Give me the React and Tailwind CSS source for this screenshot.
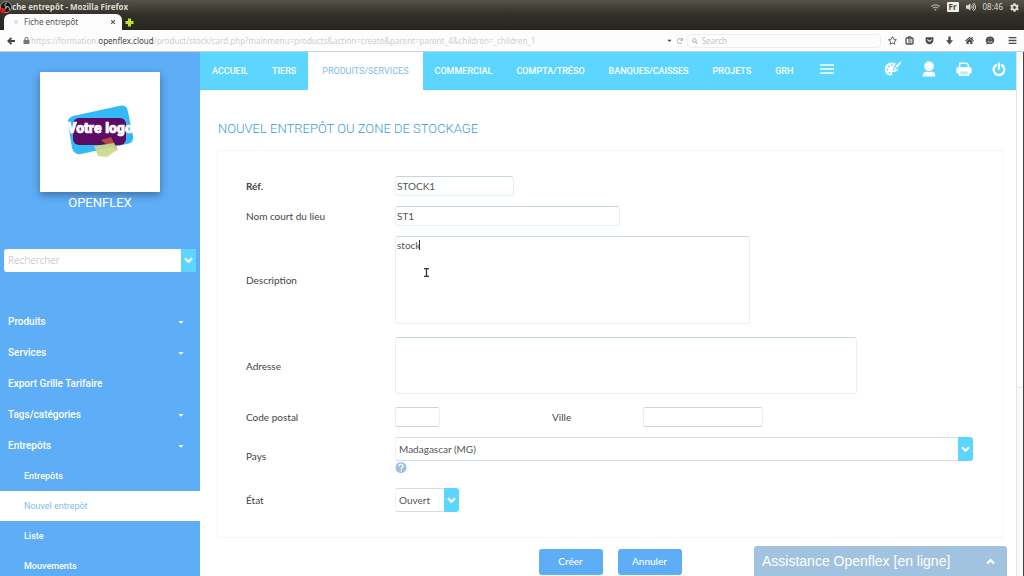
import React from 'react';
import {
  FaRegStar, FaGetPocket, FaHome, FaBars, FaCaretDown, FaLock, FaWifi,
  FaVolumeUp, FaSearch, FaTimes, FaRedo, FaCog,
} from 'react-icons/fa';

const sideMenu = [
  { label: 'Produits', open: true },
  { label: 'Services', open: true },
  { label: 'Export Grille Tarifaire', open: false },
  { label: 'Tags/catégories', open: true },
  { label: 'Entrepôts', open: true },
];

const subMenu = ['Entrepôts', 'Nouvel entrepôt', 'Liste', 'Mouvements'];

const navItems = ['ACCUEIL', 'TIERS', 'PRODUITS/SERVICES', 'COMMERCIAL', 'COMPTA/TRÉSO', 'BANQUES/CAISSES', 'PROJETS', 'GRH'];

const fieldClass = 'block border border-[#e6f1f3] border-t-[#c3d7dc] rounded-[3px] bg-white px-px text-[10px] leading-4 text-[#555] outline-none resize-none';

const ChevronDown = () => (
  <svg width="9" height="7" viewBox="0 0 9 7" fill="none" stroke="white" strokeWidth="2.200"><path d="M1 1.300 4.500 4.700 8 1.300" /></svg>
);

const ChevronUp = () => (
  <svg width="9" height="7" viewBox="0 0 9 7" fill="none" stroke="white" strokeWidth="2.200"><path d="M1 5.500 4.500 2 8 5.500" /></svg>
);

const PaletteIcon = () => (
  <svg width="18" height="16" viewBox="0 0 18 16" fill="white">
    <path fillRule="evenodd" d="M7.600 1.500C3.600 1.500.8 4.500.8 8.200c0 3.600 2.600 6.300 5.600 6.300 1.400 0 1.900-.8 1.700-1.800-.2-1.100.5-1.800 1.600-1.700 2.300.2 4.300-1 4.700-3.400L11.700 9 9 9.600l.4-2.700 2.500-4.100C10.700 1.900 9.200 1.500 7.600 1.500ZM5 4.500a.9.9 0 1 0 0 1.800.9.9 0 0 0 0-1.800ZM3.400 7.800a.9.9 0 1 0 0 1.800.9.9 0 0 0 0-1.800ZM8 3.200a.9.9 0 1 0 0 1.800.9.9 0 0 0 0-1.800ZM5.500 11a.9.9 0 1 0 0 1.800.9.9 0 0 0 0-1.800Z" />
    <path d="M16.800.8 17 2.400l-3.900 4.400-1.700-1.500L15.700 1ZM11 6l1.600 1.400c-.5 1.100-1.600 1.500-2.900 1.300C10.400 8.100 10.200 6.800 11 6Z" />
  </svg>
);

const UserIcon = () => (
  <svg width="14" height="16" viewBox="0 0 14 16" fill="white">
    <ellipse cx="7" cy="5.300" rx="4.800" ry="5" />
    <path d="M.8 15.500v-1.600c0-2.100 2-2.900 3.800-3.300 1.500.9 3.300.9 4.800 0 1.800.4 3.800 1.200 3.800 3.300v1.600Z" />
  </svg>
);

const PrintIcon = () => (
  <svg width="16" height="15" viewBox="0 0 16 15">
    <path d="M3.700 5V1.200h7l1.600 1.600V5" fill="none" stroke="white" strokeWidth="1.400" />
    <path d="M2.300 5h11.400A2 2 0 0 1 15.700 7v3.500a1 1 0 0 1-1 1h-1.400V14H2.700v-2.500H1.300a1 1 0 0 1-1-1V7a2 2 0 0 1 2-2Z" fill="white" />
    <path d="M4.300 9.500h7.400v3H4.300Z" fill="#b5ecff" />
  </svg>
);

const PowerIcon = () => (
  <svg width="14" height="15" viewBox="0 0 14 15" fill="none" stroke="white" strokeWidth="2.300" strokeLinecap="round">
    <path d="M7 1.300v5.500M3.900 3.200a5.400 5.400 0 1 0 6.200 0" />
  </svg>
);

const ListIcon = () => (
  <svg width="9" height="9" viewBox="0 0 9 9" fill="none" stroke="#4a4a4a">
    <rect x="1" y="2" width="7" height="6" rx="1" strokeWidth="1.300" />
    <path d="M3 2V.8h3V2M3 4h3.500M3 6h3.500" />
  </svg>
);

const ChatIcon = () => (
  <svg width="10" height="9" viewBox="0 0 10 9">
    <path d="M5 .5C7.400.5 9.300 2 9.300 4.200S7.400 8 5 8c-.6 0-1.200-.1-1.700-.3L1.200 8.600l.5-1.800C1 6.100.7 5.200.7 4.200.7 2 2.600.5 5 .5Z" fill="#4a4a4a" />
    <path d="M2.500 4.800c.8 1.900 4.200 1.900 5 0M3.400 2.900h.8M5.800 2.900h.8" stroke="white" strokeWidth=".8" fill="none" />
  </svg>
);

const CompanyLogo = () => (
  <svg width="70" height="56" viewBox="0 0 70 56">
    <path d="M8 12 54 2q8-2 9 6l5 24q1 7-6 8L16 50q-7 1-9-6L3 19q-1-5 5-7Z" fill="#33baf6" />
    <rect x="8" y="14" width="53" height="27" rx="6" fill="#5c0a63" />
    <path d="M36 36 46 33l7 13-11-5Z" fill="#d9652f" opacity=".7" />
    <path d="M29 42 49 39l3 7-10 7-9-1Z" fill="#c9d98a" opacity=".9" />
    <text x="35" y="29" textAnchor="middle" fontFamily="Roboto, sans-serif" fontSize="14" fontWeight="900" fill="white" stroke="white" strokeWidth=".7">Votre logo</text>
  </svg>
);

const Browser = () => (
  <header className="shrink-0 font-['Noto_Sans',sans-serif]">
    <div className="bg-linear-to-b from-[#55544a] via-[#302f28] to-[#262520] text-[#dfdbd2]">
      <div className="flex h-[14px] items-center justify-between pr-[5px]">
        <div className="flex items-center">
          <svg width="12" height="13" viewBox="0 0 12 13">
            <circle cx="6" cy="6" r="5.500" fill="#111" stroke="#bbb" strokeWidth=".7" />
            <path d="M6 6C4 4 5 2 7 2M6 6c3-1 4 1 3 3M6 6c0 3-2 3-4 2" stroke="#ddd" fill="none" />
            <circle cx="3" cy="9.500" r="2.500" fill="#e11" />
          </svg>
          <span className="text-[8px] font-bold leading-3">che entrepôt - Mozilla Firefox</span>
        </div>
        <div className="flex items-center gap-[7px] text-[8px]">
          <FaWifi size={9} className="text-[#aaa69c]" />
          <span className="rounded-[1px] bg-[#f0ede4] px-[2px] leading-[10px] font-bold text-[#444]">Fr</span>
          <FaVolumeUp size={10} />
          <span>08:46</span>
          <FaCog size={9} />
        </div>
      </div>
      <div className="flex h-4 items-center pl-1">
        <div className="flex h-4 w-[118px] items-center rounded-t-md bg-[#fcfcfc] pr-1.5 pl-2.5 text-[8px] text-[#555]">
          <span className="mr-1.5 size-1 rounded-full bg-[#ddd]" />
          <span className="flex-1">Fiche entrepôt</span>
          <button aria-label="Fermer l'onglet"><FaTimes size={6} /></button>
        </div>
        <button aria-label="Nouvel onglet" className="ml-[3px]">
          <svg width="9" height="9" viewBox="0 0 9 9" stroke="#b9e62e" strokeWidth="3"><path d="M4.500.5v8M.5 4.500h8" /></svg>
        </button>
      </div>
    </div>
    <div className="flex h-[22px] items-center border-b border-[#c9ced3] bg-[#fdfdfd] pr-[7px] text-[8px] text-[#4a4a4a]">
      <button aria-label="Précédent" className="ml-[7px]">
        <svg width="8" height="8" viewBox="0 0 8 8" fill="none" stroke="#444" strokeWidth="1.800"><path d="M4.500.8 1.300 4l3.200 3.200M1.500 4H8" /></svg>
      </button>
      <FaLock size={7} className="ml-2 text-[#777]" />
      <div className="ml-px flex flex-1 overflow-hidden whitespace-nowrap text-[#cfcfcf]">
        <span>https://formation.</span>
        <span className="text-[#444]">openflex.cloud</span>
        <span>/product/stock/card.php?mainmenu=products&amp;action=create&amp;parent=parent_4&amp;children=_children_1</span>
      </div>
      <FaCaretDown size={7} />
      <FaRedo size={6} className="mx-1 text-[#aaa]" />
      <label className="flex h-3.5 w-[194px] items-center gap-1 rounded-sm border border-[#eee] px-1 text-[#aaa]">
        <FaSearch size={6} />
        <input aria-label="Search" placeholder="Search" className="w-full outline-none placeholder:text-[#c4c4c4]" />
      </label>
      <div className="ml-[7px] flex items-center gap-[11px]">
        <div className="flex gap-2">
          <FaRegStar size={9} />
          <ListIcon />
        </div>
        <FaGetPocket size={9} />
        <svg width="9" height="9" viewBox="0 0 9 9" fill="#4a4a4a"><path d="M3.300.5h2.400v3.800H8L4.500 8.500 1 4.300h2.300Z" /></svg>
        <FaHome size={9} />
        <ChatIcon />
        <FaBars size={9} className="ml-0.5" />
      </div>
    </div>
  </header>
);

const Sidebar = () => (
  <aside className="w-[200px] shrink-0 bg-[#5eadf7] text-white">
    <div className="mx-auto mt-5 flex size-[120px] items-center justify-center bg-white shadow-[0_3px_8px_rgba(0,0,0,0.35)]">
      <CompanyLogo />
    </div>
    <p className="mt-[3px] text-center text-[13px] leading-4">OPENFLEX</p>
    <div className="mx-1 mt-[38px] flex h-[23px] overflow-hidden rounded-[3px] bg-white">
      <input aria-label="Rechercher" placeholder="Rechercher" className="min-w-0 flex-1 px-1 text-[10px] font-['Noto_Sans',sans-serif] font-light outline-none placeholder:text-[#bbb]" />
      <button aria-label="Lancer la recherche" className="flex w-[15px] items-center justify-center bg-[#5cd6ff]"><ChevronDown /></button>
    </div>
    <ul className="mt-[34px] text-[10px] font-medium">
      {sideMenu.map((item) => (
        <li key={item.label}>
          <a href="#" className="flex h-[31px] items-center justify-between pl-2 pr-[15px]">
            {item.label}
            {item.open && <FaCaretDown size={8} />}
          </a>
        </li>
      ))}
    </ul>
    <ul className="text-[9px] font-medium">
      {subMenu.map((label) => (
        <li key={label}>
          <a href="#" className={label === 'Nouvel entrepôt' ? 'flex h-[30px] items-center bg-white pl-6 pt-0.5 font-normal text-[#7fbce8]' : 'flex h-[30px] items-center pl-6 pt-0.5'}>{label}</a>
        </li>
      ))}
    </ul>
  </aside>
);

const TopNav = () => (
  <nav className="flex h-[38px] items-stretch justify-between bg-[#5cd6ff] text-[9px] font-medium text-white">
    <ul className="flex">
      {navItems.map((label) => (
        <li key={label} className="flex">
          <a href="#" className={label === 'PRODUITS/SERVICES' ? 'flex items-center bg-white px-3.5 pt-0.5 font-normal text-[#7fbce8]' : 'flex items-center px-3 pt-0.5'}>{label}</a>
        </li>
      ))}
      <li className="flex">
        <button aria-label="Menu" className="px-[15px] pb-1">
          <svg width="14" height="10" viewBox="0 0 14 10" stroke="white" strokeWidth="1.500"><path d="M0 1h14M0 5h14M0 9h14" /></svg>
        </button>
      </li>
    </ul>
    <div className="flex items-center gap-5 pr-[10px] pb-1">
      <button aria-label="Thème"><PaletteIcon /></button>
      <button aria-label="Utilisateur"><UserIcon /></button>
      <button aria-label="Imprimer"><PrintIcon /></button>
      <button aria-label="Déconnexion"><PowerIcon /></button>
    </div>
  </nav>
);

const Row = ({ label, id, bold, children }) => (
  <div className="flex items-center">
    <label htmlFor={id} className={bold ? 'w-[149px] shrink-0 font-bold' : 'w-[149px] shrink-0'}>{label}</label>
    {children}
  </div>
);

const Select = ({ id, value, className }) => (
  <div className={className}>
    <select id={id} className="h-6 min-w-0 flex-1 appearance-none rounded-l-[3px] border border-r-0 border-[#cfdfe4] border-l-[#eef4f6] bg-white px-[3px] text-[10px] text-[#555] outline-none">
      <option>{value}</option>
    </select>
    <span className="pointer-events-none flex w-[15px] items-center justify-center rounded-r-[3px] bg-[#5cd6ff] text-white"><ChevronDown /></span>
  </div>
);

const WarehouseForm = () => (
  <form className="ml-[17px] mr-[13px] font-[Lato,sans-serif]">
    <div className="mt-[11px] flex flex-col border border-[#f5f7f8] pt-[25px] pr-[29px] pb-[25px] pl-7 text-[10px] leading-4 text-[#444]">
      <Row label="Réf." id="ref" bold>
        <input id="ref" defaultValue="STOCK1" className={`${fieldClass} h-5 w-[119px]`} />
      </Row>
      <div className="mt-2.5">
        <Row label="Nom court du lieu" id="lieu">
          <input id="lieu" defaultValue="ST1" className={`${fieldClass} h-5 w-[225px]`} />
        </Row>
      </div>
      <div className="mt-2.5">
        <Row label="Description" id="desc">
          <div className="relative">
            <textarea id="desc" defaultValue="stock" className={`${fieldClass} h-[88px] w-[355px]`} />
            {/* text caret and mouse pointer */}
            <span className="absolute left-[24px] top-1 h-2.5 w-px bg-[#333]" />
            <svg className="absolute left-7 top-8" width="7" height="9" viewBox="0 0 7 9" fill="none" stroke="#333">
              <path d="M1 .5h5M1 8.500h5M3.500.5v8" strokeWidth="1.300" />
            </svg>
          </div>
        </Row>
      </div>
      <div className="mt-[13px]">
        <Row label="Adresse" id="adresse">
          <textarea id="adresse" className={`${fieldClass} h-[57px] w-[462px]`} />
        </Row>
      </div>
      <div className="mt-[13px] flex">
        <Row label="Code postal" id="cp">
          <input id="cp" className={`${fieldClass} h-5 w-[45px] border-b-[#c3d7dc]`} />
        </Row>
        <div className="ml-28 flex items-center">
          <label htmlFor="ville" className="w-[91px]">Ville</label>
          <input id="ville" className={`${fieldClass} h-5 w-[120px] border-b-[#c3d7dc]`} />
        </div>
      </div>
      <div className="mt-2.5">
        <Row label="Pays" id="pays">
          <div className="flex-1">
            <Select id="pays" value="Madagascar (MG)" className="flex" />
            <svg width="12" height="14" viewBox="0 0 12 14" className="block">
              <circle cx="6" cy="6.500" r="5.500" fill="#9dbfe2" />
              <path d="M4 5.300C4 2.600 8 2.800 8 5c0 1.400-1.800 1.500-1.800 3M6.200 9v1.300" stroke="white" strokeWidth="1.400" fill="none" />
            </svg>
          </div>
        </Row>
      </div>
      <div className="mt-[13px]">
        <Row label="État" id="etat">
          <Select id="etat" value="Ouvert" className="flex w-16" />
        </Row>
      </div>
    </div>
    <div className="mt-[11px] flex justify-center gap-[15px] text-[10px] font-medium text-white">
      <button type="submit" className="h-[26px] w-16 rounded-[3px] bg-[#5eadf7] pb-0.5">Créer</button>
      <button type="button" className="h-[26px] w-16 rounded-[3px] bg-[#5eadf7] pb-0.5">Annuler</button>
    </div>
  </form>
);

const App = () => {
  return (
    <div className="flex h-screen flex-col overflow-hidden bg-white font-[Roboto,sans-serif]">
      <Browser />
      <div className="flex min-h-0 flex-1 border-r border-[#444] overflow-hidden">
        <Sidebar />
        <main className="min-w-0 flex-1">
          <TopNav />
          <h1 className="ml-[18px] mt-[29px] text-[13px] leading-5 font-light text-[#3f9bd8]">NOUVEL ENTREPÔT OU ZONE DE STOCKAGE</h1>
          <WarehouseForm />
        </main>
        <div className="w-[7px] shrink-0 border-l border-[#e4e4e4] bg-[#fafafa]">
          <div className="mt-2 h-[328px] rounded-sm border-b border-[#ddd] bg-white" />
        </div>
      </div>
      <button className="fixed bottom-0 right-[17px] flex h-[30px] w-[253px] items-center justify-between rounded-t-[3px] bg-[#a2c3df] pl-2 pr-3 font-['Liberation_Sans',sans-serif] text-sm text-white">
        Assistance Openflex [en ligne]
        <ChevronUp />
      </button>
    </div>
  );
};

export default App;
